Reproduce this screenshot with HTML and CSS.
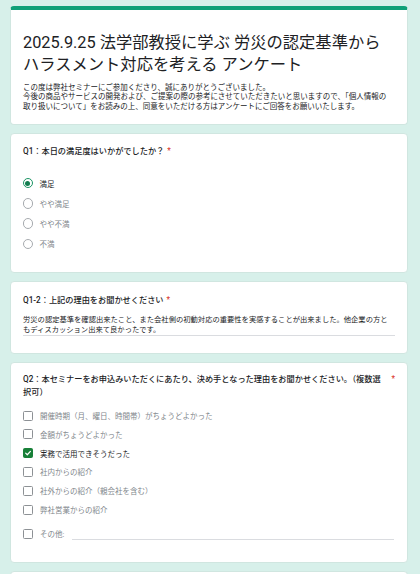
FILE: index.html
```html
<!DOCTYPE html>
<html lang="ja">
<head>
<meta charset="utf-8">
<title>アンケート</title>
<link rel="stylesheet" href="styles.css">
</head>
<body>
<main class="form">
  <section class="card card-header">
    <h1 class="title">2025.9.25 法学部教授に学ぶ 労災の認定基準から ハラスメント対応を考える アンケート</h1>
    <p class="desc">この度は弊社セミナーにご参加くださり、誠にありがとうございました。<br>今後の商品やサービスの開発および、ご提案の際の参考にさせていただきたいと思いますので、「個人情報の取り扱いについて」をお読みの上、同意をいただける方はアンケートにご回答をお願いいたします。</p>
  </section>

  <section class="card card-q1">
    <div class="qtitle"><span class="qtext">Q1：本日の満足度はいかがでしたか？</span><span class="req">*</span></div>
    <ul class="options radios">
      <li class="opt selected"><span class="radio on"></span><span class="label">満足</span></li>
      <li class="opt"><span class="radio"></span><span class="label">やや満足</span></li>
      <li class="opt"><span class="radio"></span><span class="label">やや不満</span></li>
      <li class="opt"><span class="radio"></span><span class="label">不満</span></li>
    </ul>
  </section>

  <section class="card card-q12">
    <div class="qtitle"><span class="qtext">Q1-2：上記の理由をお聞かせください</span><span class="req">*</span></div>
    <div class="answer"><p class="answer-text">労災の認定基準を確認出来たこと、また会社側の初動対応の重要性を実感することが出来ました。他企業の方ともディスカッション出来て良かったです。</p></div>
  </section>

  <section class="card card-q2">
    <div class="qtitle qtitle-2"><span class="qtext">Q2：本セミナーをお申込みいただくにあたり、決め手となった理由をお聞かせください。（複数選択可）</span><span class="req">*</span></div>
    <ul class="options checks">
      <li class="opt"><span class="check"></span><span class="label">開催時期（月、曜日、時間帯）がちょうどよかった</span></li>
      <li class="opt"><span class="check"></span><span class="label">金額がちょうどよかった</span></li>
      <li class="opt selected"><span class="check on"><svg viewBox="0 0 10 10" width="10" height="10"><path d="M2.1 5.2 L4.1 7.2 L8 2.9" fill="none" stroke="#fff" stroke-width="1.5" stroke-linecap="round" stroke-linejoin="round"/></svg></span><span class="label">実務で活用できそうだった</span></li>
      <li class="opt"><span class="check"></span><span class="label">社内からの紹介</span></li>
      <li class="opt"><span class="check"></span><span class="label">社外からの紹介（親会社を含む）</span></li>
      <li class="opt"><span class="check"></span><span class="label">弊社営業からの紹介</span></li>
      <li class="opt opt-other"><span class="check"></span><span class="label">その他:</span><span class="other-line"></span></li>
    </ul>
  </section>

  <section class="card card-next"></section>
</main>
</body>
</html>
```

FILE: styles.css
```css
* { box-sizing: border-box; }
html, body { margin: 0; padding: 0; }
body {
  background: #d7f0ea;
  font-family: Roboto, "Noto Sans CJK JP", sans-serif;
  color: #202124;
  overflow: hidden;
}
.form {
  padding: 6px 12px 0 10px;
  display: flex;
  flex-direction: column;
  gap: 8px;
}
.card {
  background: #fff;
  border: 1px solid #d0e6e0;
  border-radius: 4px;
  padding: 0 12px;
}
.card-header {
  border-top: 4px solid #10a078;
  padding-top: 22px;
  padding-bottom: 12.5px;
}
.title {
  margin: 0;
  font-size: 16.3px;
  line-height: 21.5px;
  font-weight: 400;
  color: #202124;
}
.desc {
  margin: 7.8px 0 0;
  max-width: 366px;
  font-size: 7.5px;
  line-height: 9.6px;
  color: #202124;
}
.qtitle {
  display: flex;
  align-items: flex-start;
  font-size: 8.2px;
  line-height: 12px;
  font-weight: 500;
  color: #202124;
}
.qtitle-2 {
  line-height: 13px;
  justify-content: space-between;
}
.qtitle-2 .qtext { max-width: 360px; }
.qtext { flex: 0 1 auto; }
.req {
  flex: none;
  color: #d93025;
  margin-left: 3px;
  font-weight: 400;
}
.card-q1 { padding-top: 10.7px; padding-bottom: 17.9px; }
.card-q12 { padding-top: 11.5px; padding-bottom: 17px; }
.card-q2 { padding-top: 10.5px; padding-bottom: 16.5px; }
.card-next { height: 60px; }

.options {
  list-style: none;
  margin: 0;
  padding: 0;
}
.radios { margin-top: 16.2px; }
.radios .opt { height: 20.3px; }
.checks { margin-top: 7.1px; }
.checks .opt { height: 18.8px; }
.checks .opt-other { height: 24px; margin-top: 3px; }
.opt {
  display: flex;
  align-items: center;
  font-size: 7.5px;
  color: #80868b;
}
.opt.selected { color: #202124; }
.label { white-space: nowrap; }

.radio {
  flex: none;
  width: 10.6px;
  height: 10.6px;
  border-radius: 50%;
  border: 1.2px solid #a7abaf;
  margin-left: -0.5px;
  margin-right: 6.4px;
  display: flex;
  align-items: center;
  justify-content: center;
}
.radio.on { border-color: #1a9463; }
.radio.on::after {
  content: "";
  width: 5px;
  height: 5px;
  border-radius: 50%;
  background: #137d4f;
}
.check {
  flex: none;
  width: 10px;
  height: 10px;
  border: 1.4px solid #8d9195;
  border-radius: 1.5px;
  margin-right: 7px;
  display: flex;
  align-items: center;
  justify-content: center;
}
.check.on {
  background: #188038;
  border-color: #188038;
}
.check svg { display: block; }
.other-line {
  flex: none;
  width: 322px;
  height: 1px;
  background: #dadce0;
  margin-left: 8px;
  align-self: flex-end;
  margin-bottom: 6px;
}
.answer {
  margin-top: 9px;
  border-bottom: 1px solid #dadce0;
}
.answer-text {
  margin: 0;
  max-width: 368px;
  font-size: 7.3px;
  line-height: 10px;
  color: #202124;
}
```
